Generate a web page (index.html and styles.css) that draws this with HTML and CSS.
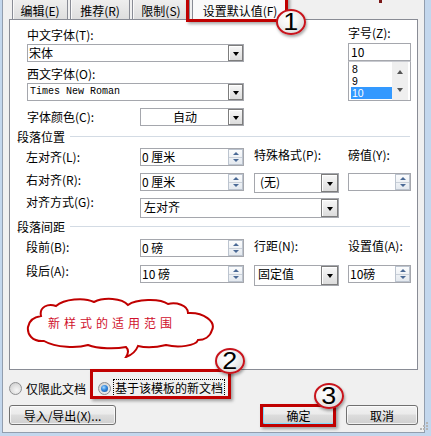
FILE: index.html
```html
<!DOCTYPE html>
<html lang="zh-CN">
<head>
<meta charset="utf-8">
<title>管理样式 - 设置默认值</title>
<link rel="stylesheet" href="styles.css">
</head>
<body>
<div class="window">
  <div class="dialog">
    <div class="tabs">
      <div class="tab t1">编辑(E)</div>
      <div class="tab t2">推荐(R)</div>
      <div class="tab t3">限制(S)</div>
      <div class="tab t4 active">设置默认值(F)</div>
    </div>
    <div class="panel">
      <div class="font-sec">
        <div class="font-left">
          <div class="lbl-block">中文字体(T):</div>
          <div class="combo"><span class="val">宋体</span><span class="dd"></span></div>
          <div class="lbl-block second">西文字体(O):</div>
          <div class="combo"><span class="val mono">Times New Roman</span><span class="dd"></span></div>
        </div>
        <div class="font-right">
          <div class="lbl-block size-lbl">字号(Z):</div>
          <div class="field"><span class="val">10</span></div>
          <div class="size-list">
            <div class="items">
              <div class="item">8</div>
              <div class="item">9</div>
              <div class="item sel">10</div>
            </div>
            <div class="vscroll"><span class="arr up"></span><span class="arr down"></span></div>
          </div>
        </div>
      </div>

      <div class="color-row">
        <span class="lbl color-lbl">字体颜色(C):</span>
        <div class="combo color-combo"><span class="val centered">自动</span><span class="dd"></span></div>
      </div>

      <div class="group-head">段落位置</div>
      <div class="grid grid-pos">
        <span class="lbl">左对齐(L):</span>
        <div class="field"><span class="val">0 厘米</span><span class="spin"><span class="sp-up"></span><span class="sp-down"></span></span></div>
        <span class="lbl c3 up2">特殊格式(P):</span>
        <span class="lbl up2">磅值(Y):</span>

        <span class="lbl up2">右对齐(R):</span>
        <div class="field"><span class="val">0 厘米</span><span class="spin"><span class="sp-up"></span><span class="sp-down"></span></span></div>
        <div class="combo c3 tall"><span class="val pad5">(无)</span><span class="dd"></span></div>
        <div class="field"><span class="val"></span><span class="spin"><span class="sp-up"></span><span class="sp-down"></span></span></div>

        <span class="lbl up5">对齐方式(G):</span>
        <div class="combo wide tall"><span class="val pad3">左对齐</span><span class="dd"></span></div>
      </div>

      <div class="group-head second-head">段落间距</div>
      <div class="grid grid-space">
        <span class="lbl up1">段前(B):</span>
        <div class="field"><span class="val">0 磅</span><span class="spin"><span class="sp-up"></span><span class="sp-down"></span></span></div>
        <span class="lbl c3 up2">行距(N):</span>
        <span class="lbl up2">设置值(A):</span>

        <span class="lbl up3">段后(A):</span>
        <div class="field"><span class="val">10 磅</span><span class="spin"><span class="sp-up"></span><span class="sp-down"></span></span></div>
        <div class="combo c3 taller"><span class="val pad3">固定值</span><span class="dd"></span></div>
        <div class="field"><span class="val">10磅</span><span class="spin"><span class="sp-up"></span><span class="sp-down"></span></span></div>
      </div>

      <div class="cloud">
        <svg class="cloud-shape" width="190" height="62" viewBox="0 0 190 62">
          <path d="M18,45 C6,46 1,38 2,31 C3,25 8,21 15,20 C13,11 22,7 30,10 C38,3 58,1 68,6 C78,1 96,2 102,9 C110,3 134,2 142,8 C150,6 162,9 162,17 C178,16 190,26 186,34 C184,41 178,44 172,44 C170,50 152,52 140,49 C132,51 120,52 112,50 C110,55 106,59 100,61 C102,58 103,54 100,51 C90,53 72,53 62,49 C52,52 30,52 18,45 Z" fill="#ffffff" stroke="#c00000" stroke-width="2"/>
        </svg>
        <span class="cloud-text">新样式的适用范围</span>
      </div>
    </div>

    <div class="radio-row">
      <label class="opt opt1"><span class="radio"></span><span>仅限此文档</span></label>
      <label class="opt opt2"><span class="radio on"></span><span class="focus">基于该模板的新文档</span></label>
    </div>

    <div class="btn-row">
      <button class="btn import">导入/导出(X)...</button>
      <button class="btn ok">确定</button>
      <button class="btn cancel">取消</button>
    </div>
  </div>

  <span class="mark"></span>
  <span class="redbox rb1"></span>
  <span class="redbox rb2"></span>
  <span class="redbox rb3"></span>
  <span class="badge b1"><span class="num">1</span></span>
  <span class="badge b2"><span class="num">2</span></span>
  <span class="badge b3"><span class="num">3</span></span>
  <svg class="grip" width="10" height="10" viewBox="0 0 10 10">
    <rect x="7" y="1" width="2" height="2" fill="#b5b5b5"/>
    <rect x="4" y="4" width="2" height="2" fill="#b5b5b5"/>
    <rect x="7" y="4" width="2" height="2" fill="#b5b5b5"/>
    <rect x="1" y="7" width="2" height="2" fill="#b5b5b5"/>
    <rect x="4" y="7" width="2" height="2" fill="#b5b5b5"/>
    <rect x="7" y="7" width="2" height="2" fill="#b5b5b5"/>
  </svg>
</div>
</body>
</html>
```
FILE: styles.css
```css
body {
  margin: 0;
  background: #f0f0f0;
}

.window {
  position: relative;
  width: 431px;
  height: 436px;
  box-sizing: border-box;
  padding: 0 6px 3px 2px;
  background: #c3d7ed;
  font-family: "Noto Sans CJK SC", "Liberation Sans", sans-serif;
  font-size: 12px;
  color: #000;
  overflow: hidden;
}

.dialog {
  height: 100%;
  box-sizing: border-box;
  background: #f0f0f0;
  border: 1px solid #929eae;
  border-top: none;
  padding: 0 6px;
}

/* tabs */
.tabs {
  position: relative;
  z-index: 1;
  display: flex;
  gap: 2px;
  height: 19px;
  padding-left: 3px;
}

.tab {
  box-sizing: border-box;
  height: 19px;
  border: 1px solid #898c95;
  border-top: none;
  border-bottom: none;
  background: linear-gradient(#eeeeee, #dedede);
  box-shadow: inset 1px 0 #fafafa;
  padding-top: 3px;
  line-height: 15px;
  text-align: center;
  white-space: nowrap;
}

.t1 { width: 56px; }
.t2 { width: 60px; }
.t3 { width: 58px; }
.t4 { width: 96px; }

.tab.active {
  height: 20px;
  background: #fafafa;
  box-shadow: none;
}

/* panel */
.panel {
  position: relative;
  height: 351px;
  box-sizing: border-box;
  border: 1px solid #898c95;
  background: #ffffff;
}

.font-sec {
  display: flex;
  padding: 7px 6px 0 17px;
}

.font-left {
  width: 217px;
}

.font-right {
  width: 63px;
  margin-left: auto;
}

.lbl-block {
  line-height: 16px;
  margin-bottom: 1px;
  white-space: nowrap;
}

.lbl-block.second {
  margin-top: 4px;
}

.lbl-block.size-lbl {
  margin-top: -2px;
  margin-bottom: 2px;
}

.lbl {
  line-height: 18px;
  white-space: nowrap;
}

.up1 { margin-top: -1px; }
.up2 { margin-top: -2px; }
.up3 { margin-top: -3px; }
.up5 { margin-top: -5px; }

/* controls */
.combo,
.field {
  display: flex;
  align-items: stretch;
  box-sizing: border-box;
  height: 18px;
  border: 1px solid #a5a7ad;
  background: #ffffff;
}

.val {
  flex: 1;
  padding-left: 1px;
  line-height: 16px;
  white-space: nowrap;
  overflow: hidden;
}

.mono {
  font-family: "Liberation Mono", monospace;
  font-size: 10px;
  padding-left: 2px;
}

.centered {
  text-align: center;
}

.pad3 { padding-left: 3px; }
.pad5 { padding-left: 5px; }

.dd {
  position: relative;
  width: 15px;
  box-sizing: border-box;
  border: 1px solid #7d7d7d;
  background: linear-gradient(#f7f7f7, #dcdcdc);
  box-shadow: inset 1px 1px #ffffff;
  display: flex;
  align-items: center;
  justify-content: center;
}

.dd::before {
  content: "";
  border-left: 3px solid transparent;
  border-right: 3px solid transparent;
  border-top: 4px solid #000000;
  margin-top: 1px;
}

.combo.tall {
  height: 20px;
}

.combo.taller {
  height: 21px;
}

.combo.tall .dd,
.combo.taller .dd {
  width: 17px;
}

.spin {
  display: flex;
  flex-direction: column;
  width: 15px;
  box-sizing: border-box;
  border: 1px solid #bcc4cf;
  background: linear-gradient(#fbfcfd, #e4e9ef);
}

.sp-up,
.sp-down {
  flex: 1;
  display: flex;
  align-items: center;
  justify-content: center;
}

.sp-down {
  border-top: 1px solid #c9d0d9;
}

.sp-up::before {
  content: "";
  border-left: 3px solid transparent;
  border-right: 3px solid transparent;
  border-bottom: 3px solid #4b6a96;
}

.sp-down::before {
  content: "";
  border-left: 3px solid transparent;
  border-right: 3px solid transparent;
  border-top: 3px solid #4b6a96;
}

/* font size list */
.font-right .field .val {
  padding-left: 2px;
}

.size-list {
  display: flex;
  box-sizing: border-box;
  height: 40px;
  border: 1px solid #a5a7ad;
  border-top-color: #c8cad0;
  background: #ffffff;
  padding-right: 2px;
}

.items {
  flex: 1;
  padding: 1px 0 0 2px;
}

.item {
  height: 12px;
  line-height: 12px;
  padding-left: 1px;
  font-family: "Liberation Sans", sans-serif;
  font-size: 10.5px;
}

.item.sel {
  background: #3399ff;
  color: #ffffff;
}

.vscroll {
  width: 16px;
  background: #efefef;
  display: flex;
  flex-direction: column;
  align-items: center;
  justify-content: space-between;
  padding: 8px 0;
  box-sizing: border-box;
}

.arr {
  width: 0;
  height: 0;
  border-left: 3px solid transparent;
  border-right: 3px solid transparent;
}

.arr.up {
  border-bottom: 4px solid #555555;
}

.arr.down {
  border-top: 4px solid #555555;
}

/* color row */
.color-row {
  display: flex;
  align-items: center;
  height: 18px;
  margin-top: 7px;
  padding-left: 17px;
}

.color-lbl {
  width: 113px;
}

.color-combo {
  width: 104px;
}

/* group headings */
.group-head {
  display: flex;
  align-items: center;
  height: 16px;
  line-height: 16px;
  margin-top: 3px;
  padding-left: 7px;
}

.group-head::after {
  content: "";
  flex: 1;
  height: 1px;
  margin: 0 7px 1px 5px;
  background: #d3dbe4;
}

.group-head.second-head {
  margin-top: 1px;
}

/* grids */
.grid {
  display: grid;
  grid-template-columns: 114px 104px 104px 63px;
  align-items: start;
  padding-left: 16px;
}

.grid-pos {
  grid-template-rows: 25px 25px 20px;
  margin-top: 3px;
}

.grid-space {
  grid-template-rows: 26px 21px;
  margin-top: 4px;
}

.c3 {
  margin-left: 10px;
  width: 85px;
}

.combo.wide {
  grid-column: span 2;
  width: 199px;
}

/* cloud callout */
.cloud {
  position: absolute;
  left: 16px;
  top: 276px;
  width: 190px;
  height: 62px;
}

.cloud-shape {
  position: absolute;
  left: 0;
  top: 0;
}

.cloud-text {
  position: absolute;
  left: 22px;
  top: 19px;
  line-height: 16px;
  letter-spacing: 4px;
  color: #d0102c;
  white-space: nowrap;
}

/* radio row */
.radio-row {
  display: flex;
  align-items: center;
  height: 18px;
  margin-top: 9px;
}

.opt {
  display: flex;
  align-items: center;
}

.opt1 {
  width: 89px;
  gap: 4px;
}

.radio {
  position: relative;
  width: 13px;
  height: 13px;
  box-sizing: border-box;
  border-radius: 50%;
  border: 1px solid #8e8f91;
  background: radial-gradient(circle at 60% 65%, #f6f6f6 0, #e2e2e2 45%, #c6c6c6 100%);
}

.radio.on::after {
  content: "";
  position: absolute;
  left: 2px;
  top: 2px;
  width: 7px;
  height: 7px;
  border-radius: 50%;
  background: radial-gradient(circle at 40% 35%, #a9dcff 0, #3a8ce0 40%, #0b4f9e 100%);
}

.focus {
  margin-left: 2px;
  padding: 0 1px;
  border: 1px dotted #000000;
  line-height: 16px;
}

/* buttons */
.btn-row {
  display: flex;
  margin-top: 8px;
}

.btn {
  box-sizing: border-box;
  height: 20px;
  padding: 0;
  border: 1px solid #707070;
  border-radius: 3px;
  background: linear-gradient(#f2f2f2 0%, #ebebeb 45%, #dddddd 50%, #cfcfcf 100%);
  box-shadow: inset 0 0 0 1px rgba(255, 255, 255, 0.7);
  font-family: "Noto Sans CJK SC", "Liberation Sans", sans-serif;
  font-size: 12px;
  line-height: 17px;
  color: #000;
  text-align: center;
}

.import {
  width: 107px;
}

.ok {
  width: 73px;
  margin-left: auto;
  border-color: #3c7fb1;
  box-shadow: inset 0 0 0 1px #7fdcfb;
}

.cancel {
  width: 72px;
  margin-left: 11px;
}

/* annotation overlays */
.redbox {
  position: absolute;
  z-index: 5;
  box-sizing: border-box;
  border: 3px solid #c00000;
  box-shadow: 2px 2px 3px rgba(0, 0, 0, 0.35);
}

.rb1 { left: 186px; top: -4px; width: 102px; height: 26px; }
.rb2 { left: 90px; top: 369px; width: 141px; height: 30px; }
.rb3 { left: 260px; top: 404px; width: 76px; height: 23px; }

.badge {
  position: absolute;
  z-index: 6;
  width: 30px;
  height: 26px;
  box-sizing: border-box;
  border: 2px solid #c8141c;
  border-radius: 50%;
  background: radial-gradient(ellipse at 40% 35%, #ffffff 0, #f4f4f4 40%, #cfcfcf 100%);
  box-shadow: 1px 2px 3px rgba(0, 0, 0, 0.35);
  display: flex;
  align-items: center;
  justify-content: center;
}

.num {
  font-family: "Liberation Sans", Arial, sans-serif;
  font-size: 24px;
  line-height: 22px;
  color: #000;
  transform: scaleX(1.12);
}

.b1 { left: 276px; top: 9px; }
.b2 { left: 215px; top: 348px; }
.b3 { left: 314px; top: 383px; }

.mark {
  position: absolute;
  left: 379px;
  top: 0;
  width: 3px;
  height: 3px;
  background: #7a1818;
}

.grip {
  position: absolute;
  z-index: 4;
  left: 419px;
  top: 421px;
}
```
